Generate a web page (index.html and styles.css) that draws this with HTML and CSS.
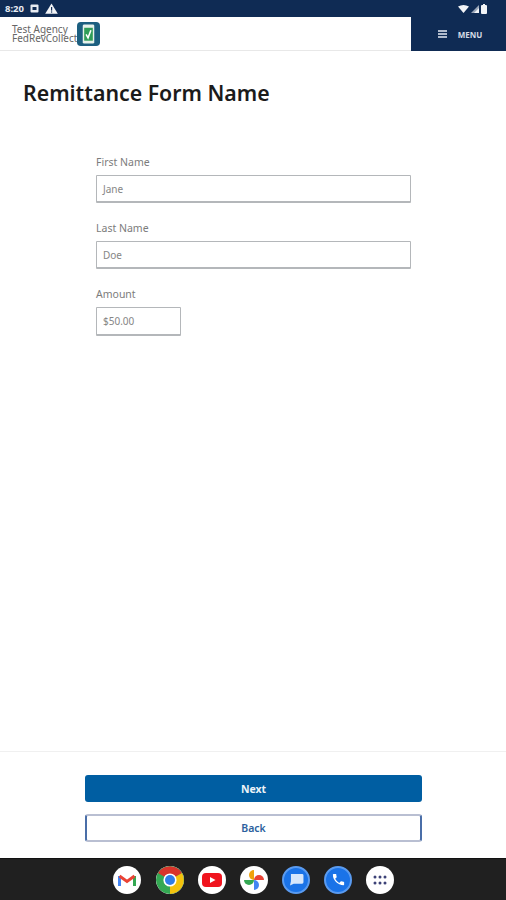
FILE: index.html
```html
<!DOCTYPE html>
<html lang="en">
<head>
    <meta charset="UTF-8">
    <meta name="viewport" content="width=device-width, initial-scale=1.0">
    <title>Remittance Form Name</title>
    <link rel="stylesheet" href="styles.css">
</head>
<body>
<div class="status-bar">
    <div class="status-left">
        <span class="clock">8:20</span>
        <svg class="status-icon" width="9" height="9" viewBox="0 0 9 9"><rect x="0.5" y="0.5" width="8" height="8" rx="1" fill="#e8ecf2"/><rect x="2.5" y="3" width="4" height="3" fill="#0f2b54"/></svg>
        <svg class="status-icon" width="13" height="11" viewBox="0 0 13 11"><path d="M6.5 0.5 L12.8 10.8 H0.2 Z" fill="#f2f4f7"/><rect x="6" y="4" width="1.2" height="3.6" fill="#0f2b54"/><rect x="6" y="8.4" width="1.2" height="1.2" fill="#0f2b54"/></svg>
    </div>
    <div class="status-right">
        <svg width="11" height="8" viewBox="0 0 11 8"><path d="M0 1.5 Q5.5 -1.5 11 1.5 L5.5 8 Z" fill="#f2f4f7"/></svg>
        <svg width="8" height="8" viewBox="0 0 8 8"><path d="M8 0 V8 H0 Z" fill="#9aa6b8"/><path d="M8 3 V8 H3 Z" fill="#f2f4f7"/></svg>
        <svg width="6" height="10" viewBox="0 0 6 10"><rect x="0" y="1" width="6" height="9" rx="1" fill="#f2f4f7"/><rect x="2" y="0" width="2" height="1" fill="#f2f4f7"/></svg>
    </div>
</div>

<header class="app-header">
    <div class="brand">
        <div class="brand-text">
            <div>Test Agency</div>
            <div>FedRevCollect</div>
        </div>
        <svg class="brand-logo" width="23" height="24" viewBox="0 0 24 25">
            <rect x="0" y="0" width="24" height="25" rx="4" fill="#1c5f80"/>
            <rect x="6" y="2.5" width="12" height="20" rx="1.5" fill="#e6f2ea"/>
            <rect x="7.5" y="6" width="9" height="13.5" fill="#2f9d58"/>
            <path d="M9.5 13 L11.5 16.5 L14.5 8.5" fill="none" stroke="#ffffff" stroke-width="1.6"/>
        </svg>
    </div>
    <div class="menu-btn">
        <svg width="9" height="8" viewBox="0 0 9 8"><path d="M0 1 H9 M0 4 H9 M0 7 H9" stroke="#e8ecf2" stroke-width="1.4"/></svg>
        <span>MENU</span>
    </div>
</header>

<main class="content">
    <h1 class="page-title">Remittance Form Name</h1>
    <form class="form">
        <div class="field">
            <label class="field-label">First Name</label>
            <div class="input">Jane</div>
        </div>
        <div class="field">
            <label class="field-label">Last Name</label>
            <div class="input">Doe</div>
        </div>
        <div class="field">
            <label class="field-label">Amount</label>
            <div class="input input-short">$50.00</div>
        </div>
    </form>
</main>

<footer class="actions">
    <button class="btn btn-primary" type="button">Next</button>
    <button class="btn btn-outline" type="button">Back</button>
</footer>

<nav class="nav-bar">
    <div class="app-icon">
        <svg width="18" height="14" viewBox="0 0 18 14">
            <path d="M1.5 13 V3" stroke="#4285f4" stroke-width="3" fill="none"/>
            <path d="M16.5 13 V3" stroke="#34a853" stroke-width="3" fill="none"/>
            <path d="M1.5 3 L9 8.5 L16.5 3" stroke="#ea4335" stroke-width="3" fill="none"/>
        </svg>
    </div>
    <div class="app-icon">
        <svg width="28" height="28" viewBox="0 0 28 28">
            <circle cx="14" cy="14" r="14" fill="#34a853"/>
            <path d="M14 14 L2 7 A14 14 0 0 1 26 7 Z" fill="#d9342b"/>
            <path d="M14 14 L26 7 A14 14 0 0 1 14 28 Z" fill="#f4c20d"/>
            <circle cx="14" cy="14" r="6.6" fill="#fff"/>
            <circle cx="14" cy="14" r="5" fill="#2f7de8"/>
        </svg>
    </div>
    <div class="app-icon">
        <svg width="20" height="14" viewBox="0 0 20 14">
            <rect width="20" height="14" rx="4" fill="#f0141e"/>
            <path d="M8 4 L13.5 7 L8 10 Z" fill="#fff"/>
        </svg>
    </div>
    <div class="app-icon">
        <svg width="20" height="20" viewBox="0 0 20 20">
            <path d="M10 10 V0 A5 5 0 0 0 5 5 A5 5 0 0 0 10 10 Z" fill="#f0a30a"/>
            <path d="M10 10 H20 A5 5 0 0 0 15 5 A5 5 0 0 0 10 10 Z" fill="#ea4335"/>
            <path d="M10 10 V20 A5 5 0 0 0 15 15 A5 5 0 0 0 10 10 Z" fill="#4285f4"/>
            <path d="M10 10 H0 A5 5 0 0 0 5 15 A5 5 0 0 0 10 10 Z" fill="#34a853"/>
        </svg>
    </div>
    <div class="app-icon app-icon-blue">
        <svg width="15" height="13" viewBox="0 0 16 14">
            <path d="M2 1 H14 A1.5 1.5 0 0 1 15.5 2.5 V10 A1.5 1.5 0 0 1 14 11.5 H5 L1 13.5 L2 9 Z" fill="#d6e6fb"/>
        </svg>
    </div>
    <div class="app-icon app-icon-blue">
        <svg width="15" height="15" viewBox="0 0 24 24">
            <path d="M6.6 10.8 a15 15 0 0 0 6.6 6.6 l2.2-2.2 a1 1 0 0 1 1-.25 a11.400 11.400 0 0 0 3.600 .57 a1 1 0 0 1 1 1 V20 a1 1 0 0 1-1 1 A17 17 0 0 1 3 4 a1 1 0 0 1 1-1 h3.500 a1 1 0 0 1 1 1 a11.400 11.400 0 0 0 .57 3.600 a1 1 0 0 1-.25 1 Z" fill="#fff"/>
        </svg>
    </div>
    <div class="app-icon">
        <svg width="14" height="10" viewBox="0 0 14 10">
            <g fill="#3c4277">
                <circle cx="2" cy="2" r="1.500"/><circle cx="7" cy="2" r="1.500"/><circle cx="12" cy="2" r="1.500"/>
                <circle cx="2" cy="8" r="1.500"/><circle cx="7" cy="8" r="1.500"/><circle cx="12" cy="8" r="1.500"/>
            </g>
        </svg>
    </div>
</nav>
</body>
</html>
```

FILE: styles.css
```css
* {
    box-sizing: border-box;
}

html, body {
    margin: 0;
    height: 100%;
}

body {
    display: flex;
    flex-direction: column;
    height: 900px;
    overflow: hidden;
    background: #fff;
    font-family: "Noto Sans", "Open Sans", sans-serif;
    color: #222;
}

.status-bar {
    height: 17px;
    padding: 0 19px 0 5px;
    display: flex;
    justify-content: space-between;
    align-items: center;
    background: #0f2b54;
}

.status-left, .status-right {
    display: flex;
    align-items: center;
}

.status-left {
    gap: 6px;
}

.status-right {
    gap: 2px;
}

.clock {
    font-size: 9.5px;
    font-weight: 700;
    color: #e8ecf2;
}

.app-header {
    height: 34px;
    display: flex;
    justify-content: space-between;
    border-bottom: 1px solid #e8e8e8;
}

.brand {
    display: flex;
    align-items: center;
    padding-left: 12px;
}

.brand-text {
    font-size: 10px;
    line-height: 9px;
    color: #666;
    width: 65px;
    white-space: nowrap;
}

.menu-btn {
    width: 95px;
    margin-bottom: -1px;
    display: flex;
    align-items: center;
    justify-content: center;
    gap: 11px;
    padding-left: 3px;
    background: #0f2b54;
    color: #d5dbe5;
    font-size: 8px;
    font-weight: 700;
}

.content {
    flex: 1;
    border-bottom: 1px solid #f0f0f0;
}

.page-title {
    margin: 28px 0 0 23px;
    font-size: 21.3px;
    line-height: 28px;
    font-weight: 600;
    color: #1b1b1b;
}

.form {
    margin: 48px 0 0 96px;
    width: 315px;
}

.field {
    margin-bottom: 18px;
}

.field-label {
    display: block;
    margin-bottom: 6px;
    font-size: 10.5px;
    line-height: 14px;
    color: #7c7c7c;
}

.input {
    height: 28px;
    padding: 0 6px;
    display: flex;
    align-items: center;
    border: 1px solid #b4b7ba;
    border-bottom-width: 2px;
    border-radius: 1px;
    font-size: 10px;
    color: #868686;
}

.input-short {
    width: 85px;
    height: 29px;
}

.actions {
    height: 106px;
    padding: 23px 0 0 1px;
    display: flex;
    flex-direction: column;
    align-items: center;
    gap: 12px;
}

.btn {
    width: 337px;
    height: 28px;
    padding: 0;
    border-radius: 3px;
    font-family: inherit;
    font-size: 10.5px;
    font-weight: 700;
}

.btn-primary {
    height: 27px;
    border: none;
    background: #005ea2;
    color: #eef4f9;
}

.btn-outline {
    border: 2px solid #b9bfd2;
    border-left-color: #4a6ea8;
    border-right-color: #4a6ea8;
    background: #fff;
    color: #2c5f9e;
    font-weight: 600;
}

.nav-bar {
    height: 42px;
    padding-left: 113px;
    display: flex;
    align-items: center;
    gap: 14px;
    background: #202020;
    border-top: 1px solid #111;
}

.app-icon {
    flex: none;
    width: 28px;
    height: 28px;
    display: flex;
    align-items: center;
    justify-content: center;
    border-radius: 50%;
    background: #fff;
    overflow: hidden;
}

.app-icon:first-child {
    margin-right: 1px;
}

.app-icon-blue {
    background: #1a73e8;
    border: 2px solid #5a9bf0;
}
```
